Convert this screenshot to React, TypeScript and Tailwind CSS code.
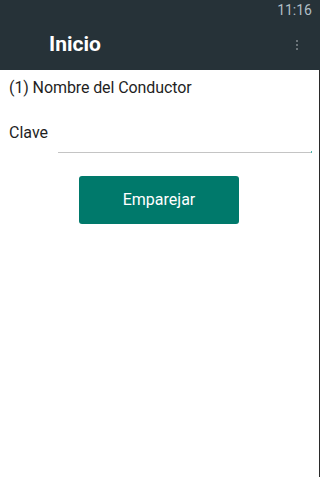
export default function App() {
  return (
    <div className="w-[320px] h-[477px] flex flex-col bg-white font-['Roboto',sans-serif] overflow-hidden">
      <div className="h-[70px] bg-[#263238] flex flex-col shrink-0">
        <div className="h-[17px] flex justify-end items-center pr-[8px]">
          <span className="text-[14px] leading-none text-[#b0bec5] pt-[2px]">11:16</span>
        </div>
        <div className="flex-1 flex items-center pl-[49px] pr-[22px] pt-[2px]">
          <span className="text-[21px] font-bold text-white">Inicio</span>
          <div className="ml-auto flex flex-col gap-[2px]">
            <span className="w-[2px] h-[2px] bg-[#6b7479]" />
            <span className="w-[2px] h-[2px] bg-[#6b7479]" />
            <span className="w-[2px] h-[2px] bg-[#6b7479]" />
          </div>
        </div>
      </div>
      <div className="flex-1 flex border-r border-[#2a2a2a]">
        <div className="flex-1 flex flex-col text-[16px] text-[#1f1f1f]">
          <div className="pl-[9px] pt-[7px] leading-[21px] tracking-[-0.1px]">(1) Nombre del Conductor</div>
          <div className="flex items-start mt-[22px]">
            <div className="pl-[9px] pt-[2px] leading-[21px] w-[58px] shrink-0">Clave</div>
            <div className="flex-1 mr-[7px] h-[33px] flex items-end">
              <div className="flex-1 h-[1px] bg-[#c4c4c4]" />
              <div className="w-[1px] h-[2px] bg-[#4db6ac]" />
            </div>
          </div>
          <div className="flex justify-center mt-[23px] pr-[1px]">
            <button className="w-[160px] h-[48px] rounded-[3px] bg-[#00796b] text-white text-[16px]">
              Emparejar
            </button>
          </div>
        </div>
      </div>
    </div>
  );
}
